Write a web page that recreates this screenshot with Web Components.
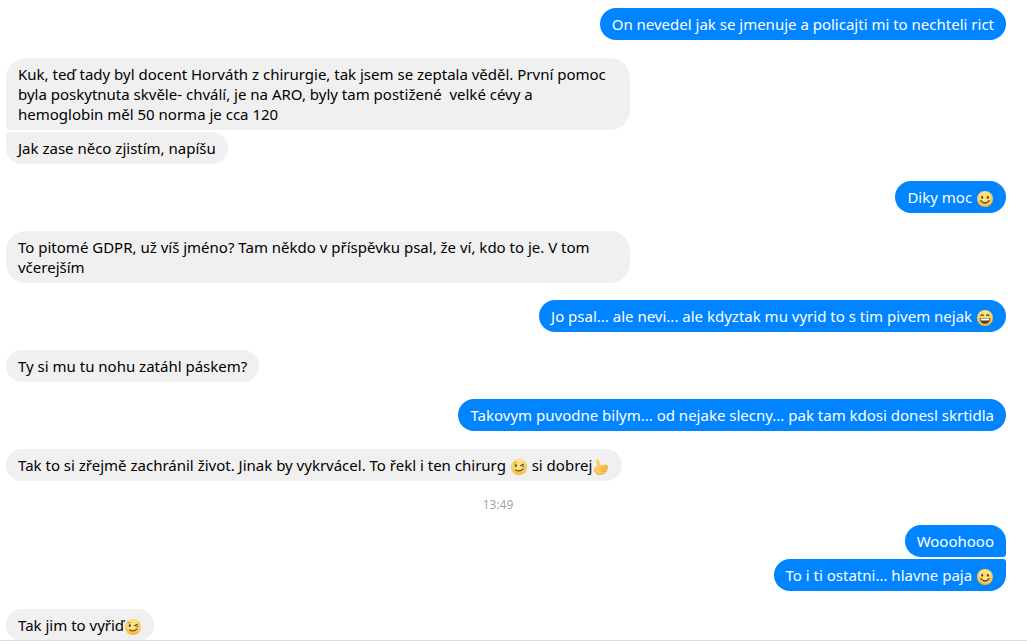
<!DOCTYPE html>
<html lang="cs">
<head>
<meta charset="utf-8">
<meta name="viewport" content="width=device-width, initial-scale=1">
<title>Chat</title>
<style>
body { margin: 0; background: #fff; color: #000; font: 15px/20px "Noto Sans", "Open Sans", sans-serif; }
</style>
</head>
<body>
<chat-thread>
  <message-group from="me">
    <chat-message>On nevedel jak se jmenuje a policajti mi to nechteli rict</chat-message>
  </message-group>
  <message-group>
    <chat-message>Kuk, teď tady byl docent Horváth z chirurgie, tak jsem se zeptala věděl. První pomoc byla poskytnuta skvěle- chválí, je na ARO, byly tam postižené&nbsp; velké cévy a hemoglobin měl 50 norma je cca 120</chat-message>
    <chat-message>Jak zase něco zjistím, napíšu</chat-message>
  </message-group>
  <message-group from="me">
    <chat-message>Diky moc <chat-emoji name="smile"></chat-emoji></chat-message>
  </message-group>
  <message-group>
    <chat-message>To pitomé GDPR, už víš jméno? Tam někdo v příspěvku psal, že ví, kdo to je. V tom včerejším</chat-message>
  </message-group>
  <message-group from="me">
    <chat-message>Jo psal... ale nevi... ale kdyztak mu vyrid to s tim pivem nejak <chat-emoji name="grin"></chat-emoji></chat-message>
  </message-group>
  <message-group>
    <chat-message>Ty si mu tu nohu zatáhl páskem?</chat-message>
  </message-group>
  <message-group from="me">
    <chat-message>Takovym puvodne bilym... od nejake slecny... pak tam kdosi donesl skrtidla</chat-message>
  </message-group>
  <message-group>
    <chat-message>Tak to si zřejmě zachránil život. Jinak by vykrvácel. To řekl i ten chirurg <chat-emoji name="wink"></chat-emoji> si dobrej<chat-emoji name="thumb"></chat-emoji></chat-message>
  </message-group>
  <time-divider>13:49</time-divider>
  <message-group from="me">
    <chat-message>Wooohooo</chat-message>
    <chat-message>To i ti ostatni... hlavne paja <chat-emoji name="smile"></chat-emoji></chat-message>
  </message-group>
  <message-group>
    <chat-message>Tak jim to vyřiď<chat-emoji name="wink"></chat-emoji></chat-message>
  </message-group>
</chat-thread>

<script>
function define(name, html, setup) {
  const template = document.createElement('template');
  template.innerHTML = html;
  customElements.define(name, class extends HTMLElement {
    constructor() {
      super();
      this.attachShadow({ mode: 'open' }).append(template.content.cloneNode(true));
    }
    connectedCallback() { if (setup) setup(this); }
  });
}

define('chat-thread', `
  <style>
    :host { display: block; }
    main { display: flex; flex-direction: column; gap: 18px; padding: 8px 21px 0 6px; }
    footer { position: relative; height: 3px; border-top: 1px solid #ddd; background: #fff; }
  </style>
  <main><slot></slot></main>
  <footer></footer>`);

define('message-group', `
  <style>
    :host { display: flex; flex-direction: column; align-items: flex-start; gap: 2px; margin-bottom: -1px; }
    :host([from="me"]) {
      align-items: flex-end; margin-bottom: 0;
      --bubble: #0084ff; --ink: #fff;
    }
    ::slotted(chat-message) { border-radius: var(--tl, 20px) var(--tr, 20px) var(--br, 20px) var(--bl, 20px); }
    :host(:not([from="me"])) ::slotted(:not(:last-child)) { --bl: 4px; }
    :host(:not([from="me"])) ::slotted(:not(:first-child)) { --tl: 4px; }
    :host([from="me"]) ::slotted(:not(:last-child)) { --br: 4px; }
    :host([from="me"]) ::slotted(:not(:first-child)) { --tr: 4px; }
  </style>
  <slot></slot>`);

define('chat-message', `
  <style>
    :host {
      display: block; box-sizing: border-box; max-width: 62.4%; padding: 6px 12px;
      background: var(--bubble, #f0f0f0); color: var(--ink, #000);
    }
  </style>
  <slot></slot>`);

define('time-divider', `
  <style>
    :host { display: block; text-align: center; font-size: 12px; line-height: 14px; color: rgba(0, 0, 0, .4); margin-bottom: -5px; padding-right: 16px; }
  </style>
  <time><slot></slot></time>`);

const face = `
  <defs><radialGradient id="g" cx=".5" cy=".35" r=".7">
    <stop offset=".4" stop-color="#ffe07a"/><stop offset="1" stop-color="#f0ac2c"/>
  </radialGradient></defs>
  <circle cx="8" cy="8" r="8" fill="url(#g)"/>`;
const art = {
  smile: face + `
    <ellipse cx="5.2" cy="6.2" rx="1" ry="1.5" fill="#4d4438"/>
    <ellipse cx="10.8" cy="6.2" rx="1" ry="1.5" fill="#4d4438"/>
    <path d="M3.8 9.6Q8 14.4 12.2 9.6" fill="none" stroke="#5c4526" stroke-width="1.3" stroke-linecap="round"/>`,
  grin: face + `
    <path d="M3.9 5.8Q5.2 3.4 6.4 5.8M9.6 5.8Q10.8 3.4 12.1 5.8" fill="none" stroke="#4d4438" stroke-width="1.2" stroke-linecap="round"/>
    <path d="M2.6 8H13.4Q13 13.8 8 13.8T2.6 8Z" fill="#4a3b2b"/>
    <path d="M3.4 8.4H12.6L12 10.6H4Z" fill="#fff"/>`,
  wink: face + `
    <ellipse cx="4.8" cy="6.6" rx="1.1" ry="1.4" fill="#4d4438"/>
    <path d="M3 4.2Q4.2 3 5.8 3.5" fill="none" stroke="#b98425" stroke-width=".8" stroke-linecap="round"/>
    <path d="M12.8 5.2L9.4 6.5L12.8 7.4" fill="none" stroke="#4d4438" stroke-width="1" stroke-linecap="round" stroke-linejoin="round"/>
    <path d="M4.6 11Q8.8 13.4 12 9.8" fill="none" stroke="#5c4526" stroke-width="1.2" stroke-linecap="round"/>`,
  thumb: `
    <path d="M3.5 .8Q5.2-.2 5.9 1.8L7.4 6.1L13.2 5.4Q15 5.6 14.7 7.2Q15.6 8.3 14.6 9.6Q15 11 13.6 11.9Q13.5 13.5 11.8 14Q7.5 16.4 4.2 15Q1.7 13.8 1.2 10.8Q.6 8.5 2.7 7.6L4 6.9L3 2.5Z" fill="#fbcb5b"/>
    <path d="M8.6 8.4L14.5 7.3M8.8 10.5L14.5 9.7M9 12.6L13.5 12M1.3 11Q2 14 4.4 15Q7.8 16.2 11.8 14" fill="none" stroke="#e09a35" stroke-width=".8" stroke-linecap="round"/>`
};
const labels = { smile: 'úsměv', grin: 'smích', wink: 'mrknutí', thumb: 'palec nahoru' };

define('chat-emoji', `
  <style>
    :host { display: inline-block; width: 16px; height: 16px; margin: 0 1px; vertical-align: -4px; line-height: 0; }
    svg { display: block; width: 16px; height: 16px; }
  </style>
  <svg viewBox="0 0 16 16" role="img"></svg>`,
  el => {
    const svg = el.shadowRoot.querySelector('svg');
    const name = el.getAttribute('name');
    svg.setAttribute('aria-label', labels[name]);
    svg.innerHTML = art[name];
  });
</script>
</body>
</html>
